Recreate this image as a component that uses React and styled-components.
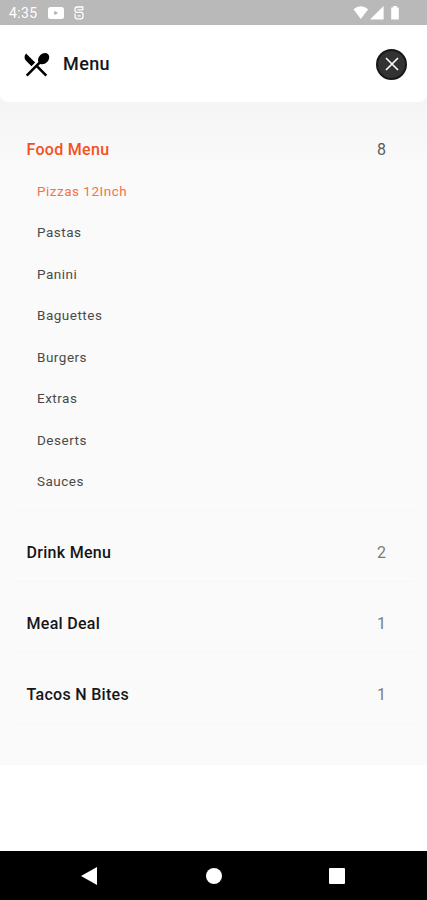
import React from 'react'
import styled, { createGlobalStyle } from 'styled-components'
import { MdRestaurantMenu } from 'react-icons/md'

const menus = [
  {
    title: 'Food Menu',
    count: 8,
    open: true,
    items: ['Pizzas 12Inch', 'Pastas', 'Panini', 'Baguettes', 'Burgers', 'Extras', 'Deserts', 'Sauces'],
  },
  { title: 'Drink Menu', count: 2 },
  { title: 'Meal Deal', count: 1 },
  { title: 'Tacos N Bites', count: 1 },
]

const StatusIcons = () => (
  <svg width="48" height="16" viewBox="0 0 48 16" fill="#fff">
    <path d="M0.5 4.2Q7.8 -1.6 15.2 4.2L7.8 14Z" />
    <path d="M30.6 1V14.4H17Z" />
    <path d="M38.2 2.4h2V1h3.6v1.4h2V14.5h-7.6z" />
  </svg>
)

const App = () => {
  return (
    <Screen>
      <GlobalStyle />
      <StatusBar>
        <time>4:35</time>
        <svg width="16" height="12" viewBox="0 0 16 12">
          <rect width="16" height="12" rx="2.5" fill="#fff" />
          <path d="M6.3 4L10.1 6L6.3 8Z" fill="#a8a8a8" />
        </svg>
        <svg width="10" height="14" viewBox="0 0 10 14" fill="none" stroke="#fff" strokeWidth="1.3">
          <path d="M8.8 4V1H3.2Q1 1 1 3.2V4.6Q1 6.4 3 6.4H7Q9 6.4 9 8.6V10.6Q9 12.9 6.8 12.9H3.2Q1 12.9 1 10.6V7.4M3.4 3.8H9M3.6 9.8H6.6" />
        </svg>
        <StatusRight>
          <StatusIcons />
        </StatusRight>
      </StatusBar>
      <Main>
        <Header>
          <MdRestaurantMenu size={31} color="#000" />
          <h1>Menu</h1>
          <CloseButton aria-label="Close">
            <svg width="14" height="14" viewBox="0 0 14 14" stroke="#fff" strokeWidth="1.6">
              <path d="M1 1L13 13M13 1L1 13" />
            </svg>
          </CloseButton>
        </Header>
        {menus.map((menu) => (
          <Section key={menu.title}>
            <SectionHead $open={menu.open}>
              <h2>{menu.title}</h2>
              <span>{menu.count}</span>
            </SectionHead>
            {menu.items && (
              <ItemList>
                {menu.items.map((item, i) => (
                  <Item key={item} $active={i === 0}>
                    {item}
                  </Item>
                ))}
              </ItemList>
            )}
          </Section>
        ))}
      </Main>
      <NavBar>
        <svg width="16" height="18" viewBox="0 0 16 18" fill="#fff">
          <path d="M0 9L16 0V18Z" />
        </svg>
        <HomeIcon width="16" height="16" viewBox="0 0 16 16" fill="#fff">
          <circle cx="8" cy="8" r="8" />
        </HomeIcon>
        <svg width="16" height="16" viewBox="0 0 16 16" fill="#fff">
          <rect width="16" height="16" rx="1" />
        </svg>
      </NavBar>
    </Screen>
  )
}

const GlobalStyle = createGlobalStyle`
  * {
    box-sizing: border-box;
  }
  body {
    margin: 0;
    background: #fff;
    font-family: Roboto, sans-serif;
  }
  h1, h2, ul {
    margin: 0;
    padding: 0;
  }
  svg {
    display: block;
    flex: none;
  }
`

const Screen = styled.div`
  width: 427px;
  height: 900px;
  display: flex;
  flex-direction: column;
  overflow: hidden;
`

const StatusBar = styled.div`
  height: 25px;
  flex: none;
  display: flex;
  align-items: center;
  padding: 1px 26px 0 9px;
  background: #b9b9b9;
  time {
    width: 39px;
    color: #fff;
    font-size: 14px;
    letter-spacing: 0.4px;
  }
  svg + svg {
    margin-left: 10px;
  }
`

const StatusRight = styled.div`
  margin-left: auto;
`

const Main = styled.main`
  height: 740px;
  flex: none;
  background: linear-gradient(#f5f5f5 77px, #fafafa 145px);
`

const Header = styled.header`
  height: 77px;
  display: flex;
  align-items: center;
  padding: 0 20px 0 21px;
  background: #fff;
  border-radius: 0 0 8px 8px;
  > svg {
    margin-top: 1px;
  }
  h1 {
    margin-left: 11px;
    color: #161616;
    font-size: 18px;
    font-weight: 500;
    letter-spacing: 0.4px;
  }
`

const CloseButton = styled.button`
  width: 31px;
  height: 31px;
  margin: 1px 0 0 auto;
  padding: 0;
  display: grid;
  place-items: center;
  border: 2px solid #181818;
  border-radius: 50%;
  background: #333;
`

const Section = styled.section`
  margin: 0 12px 0 15px;
  border-bottom: 1px solid #f6f6f6;
`

const SectionHead = styled.div`
  height: 70px;
  display: flex;
  align-items: center;
  justify-content: space-between;
  padding: ${(props) => (props.$open ? '25px' : '12px')} 29px 0 11.5px;
  h2 {
    color: ${(props) => (props.$open ? '#f4511e' : '#161616')};
    font-size: 16px;
    font-weight: 500;
    letter-spacing: 0.3px;
  }
  span {
    color: ${(props) => (props.$open ? '#5c5c5c' : '#7c7c7c')};
    font-size: 16px;
    font-weight: 400;
  }
`

const ItemList = styled.ul`
  padding: 0 0 8px 22px;
  margin-top: -2px;
  list-style: none;
`

const Item = styled.li`
  height: 41.5px;
  display: flex;
  align-items: center;
  color: ${(props) => (props.$active ? '#f8704a' : '#4a4a4a')};
  font-size: 13.5px;
  letter-spacing: 0.5px;
`

const NavBar = styled.nav`
  height: 49px;
  flex: none;
  margin-top: auto;
  display: flex;
  align-items: center;
  justify-content: space-between;
  padding: 0 82px 0 81px;
  background: #000;
`

const HomeIcon = styled.svg`
  margin-left: 2px;
`

export default App
